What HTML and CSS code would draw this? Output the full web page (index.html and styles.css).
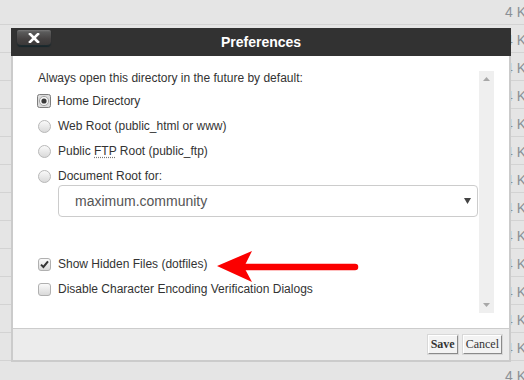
FILE: index.html
```html
<!DOCTYPE html>
<html>
<head>
<meta charset="utf-8">
<title>Preferences</title>
<link rel="stylesheet" href="styles.css">
</head>
<body>
<div class="bg">
  <div class="row"><span class="size">4 KB</span></div>
  <div class="row"><span class="size">4 KB</span></div>
  <div class="row"><span class="size">4 KB</span></div>
  <div class="row"><span class="size">4 KB</span></div>
  <div class="row"><span class="size">4 KB</span></div>
  <div class="row"><span class="size">4 KB</span></div>
  <div class="row"><span class="size">4 KB</span></div>
  <div class="row"><span class="size">4 KB</span></div>
  <div class="row"><span class="size">4 KB</span></div>
  <div class="row"><span class="size">4 KB</span></div>
  <div class="row"><span class="size">4 KB</span></div>
  <div class="row"><span class="size">4 KB</span></div>
  <div class="row"><span class="size">4 KB</span></div>
  <div class="row"><span class="size">4 KB</span></div>
</div>

<div class="dialog">
  <div class="titlebar">
    <button class="close" aria-label="Close">
      <svg width="12" height="10" viewBox="0 0 12 10"><path d="M2 1 L10 9 M10 1 L2 9" stroke="#fff" stroke-width="2.6" stroke-linecap="square"/></svg>
    </button>
    <span class="title">Preferences</span>
  </div>
  <div class="panel">
    <div class="body">
      <div class="content">
        <div class="heading">Always open this directory in the future by default:</div>
        <div class="options">
          <label class="opt">
            <svg class="ctl" width="14" height="14" viewBox="0 0 14 14"><rect x="0.5" y="0.5" width="13" height="13" rx="2" fill="#dcdcdc" stroke="#7d7d7d"/><circle cx="7" cy="7" r="4.6" fill="#f5f5f5" stroke="#a5a5a5"/><circle cx="7" cy="7" r="2.6" fill="#3a3a3a"/></svg>
            <span>Home Directory</span>
          </label>
          <label class="opt">
            <svg class="ctl" width="13" height="13" viewBox="0 0 13 13"><defs><linearGradient id="rg" x1="0" y1="0" x2="0" y2="1"><stop offset="0" stop-color="#fbfbfb"/><stop offset="1" stop-color="#d8d8d8"/></linearGradient></defs><circle cx="6.5" cy="6.5" r="6" fill="url(#rg)" stroke="#b8b8b8"/></svg>
            <span>Web Root (public_html or www)</span>
          </label>
          <label class="opt">
            <svg class="ctl" width="13" height="13" viewBox="0 0 13 13"><circle cx="6.5" cy="6.5" r="6" fill="url(#rg)" stroke="#b8b8b8"/></svg>
            <span>Public <abbr title="File Transfer Protocol">FTP</abbr> Root (public_ftp)</span>
          </label>
          <label class="opt">
            <svg class="ctl" width="13" height="13" viewBox="0 0 13 13"><circle cx="6.5" cy="6.5" r="6" fill="url(#rg)" stroke="#b8b8b8"/></svg>
            <span>Document Root for:</span>
          </label>
        </div>
        <div class="select">
          <span>maximum.community</span>
          <svg width="7" height="6" viewBox="0 0 7 6"><path d="M0 0 H7 L3.5 6 Z" fill="#444"/></svg>
        </div>
        <div class="checks">
          <label class="opt">
            <svg class="ctl" width="13" height="13" viewBox="0 0 13 13"><defs><linearGradient id="cg" x1="0" y1="0" x2="0" y2="1"><stop offset="0" stop-color="#fbfbfb"/><stop offset="1" stop-color="#d8d8d8"/></linearGradient></defs><rect x="0.5" y="0.5" width="12" height="12" rx="2.5" fill="url(#cg)" stroke="#b0b0b0"/><path d="M3 6.6 L5.4 9 L10 3.4" fill="none" stroke="#333" stroke-width="2"/></svg>
            <span>Show Hidden Files (dotfiles)</span>
          </label>
          <label class="opt">
            <svg class="ctl" width="13" height="13" viewBox="0 0 13 13"><rect x="0.5" y="0.5" width="12" height="12" rx="2.5" fill="url(#cg)" stroke="#b0b0b0"/></svg>
            <span>Disable Character Encoding Verification Dialogs</span>
          </label>
        </div>
      </div>
      <div class="scrollbar">
        <svg width="15" height="14" viewBox="0 0 15 14"><path d="M4 9 H11 L7.5 5 Z" fill="#a8a8a8"/></svg>
        <svg width="15" height="14" viewBox="0 0 15 14"><path d="M4 5 H11 L7.5 9 Z" fill="#a8a8a8"/></svg>
      </div>
    </div>
    <div class="footer">
      <button class="btn save">Save</button>
      <button class="btn">Cancel</button>
    </div>
  </div>
</div>

<svg class="annot" width="150" height="40" viewBox="0 0 150 40">
  <line x1="30" y1="21" x2="139" y2="21" stroke="#fb0000" stroke-width="6.5" stroke-linecap="round"/>
  <path d="M1 20 L36 5 L29 19 L29 23 L36 36 Z" fill="#fb0000"/>
</svg>
</body>
</html>
```

FILE: styles.css
```css
html, body {
  margin: 0;
  padding: 0;
}
body {
  width: 524px;
  height: 380px;
  overflow: hidden;
  position: relative;
  background: #e4e4e4;
  font-family: "Liberation Sans", Arial, sans-serif;
}

.bg {
  margin-top: -3px;
}
.row {
  border-bottom: 1px solid #d3d3d3;
  background: #e5e5e5;
  display: flex;
  align-items: center;
  padding-left: 505px;
  padding-top: 2px;
  height: 25px;
  white-space: nowrap;
  overflow: hidden;
}
.size {
  font-size: 14px;
  color: #8b9096;
}

.dialog {
  position: absolute;
  left: 11px;
  top: 28px;
  width: 500px;
}
.titlebar {
  height: 28px;
  background: #323232;
  display: flex;
  align-items: center;
  justify-content: center;
  position: relative;
}
.close {
  position: absolute;
  left: 6px;
  top: 2px;
  width: 34px;
  height: 16px;
  padding: 0;
  margin: 0;
  border: none;
  border-bottom: 1px solid #1d2a2e;
  border-radius: 2px 2px 4px 4px;
  background: linear-gradient(#7a7a7a 0, #5b5b5b 2px, #454242 60%, #3b3939 100%);
  display: flex;
  align-items: center;
  justify-content: center;
  box-shadow: 0 1px 1px #17262b;
}
.title {
  color: #fff;
  font-weight: bold;
  font-size: 14px;
}

.panel {
  border: 2px solid #cbcbcb;
  border-top: none;
}
.body {
  background: #fff;
  height: 272px;
  box-sizing: border-box;
  padding: 15px;
  display: flex;
}
.content {
  flex: 1;
  padding-left: 10px;
  padding-right: 1px;
  color: #333;
  font-size: 12px;
}
.heading {
  line-height: 14px;
}
.options {
  margin-top: 6px;
  display: flex;
  flex-direction: column;
  gap: 5px;
}
.opt {
  display: flex;
  align-items: center;
  height: 20px;
}
.ctl {
  flex: none;
  width: 13px;
  margin-right: 7px;
}
.opt:first-child .ctl {
  width: 14px;
  margin-left: -1px;
  margin-right: 6px;
}
.checks .opt:first-child .ctl {
  width: 13px;
  margin-left: 0;
  margin-right: 7px;
}
abbr {
  text-decoration: underline dotted #777;
  text-underline-offset: 2px;
}
.select {
  margin: -1px 0 0 20px;
  height: 32px;
  box-sizing: border-box;
  border: 1px solid #cccccc;
  border-radius: 4px;
  display: flex;
  align-items: center;
  justify-content: space-between;
  padding: 0 6px 0 16px;
  font-size: 14px;
  color: #555;
}
.checks {
  margin-top: 37px;
  display: flex;
  flex-direction: column;
  gap: 5px;
}
.scrollbar {
  width: 15px;
  background: #efefef;
  display: flex;
  flex-direction: column;
  justify-content: space-between;
  padding: 1px 0;
}
.scrollbar svg {
  display: block;
}

.footer {
  background: #ececec;
  border-top: 1px solid #cccccc;
  height: 31px;
  display: flex;
  align-items: center;
  justify-content: flex-end;
  gap: 5px;
  padding-right: 7px;
}
.btn {
  height: 19px;
  margin: 0;
  padding: 0 2px;
  font-family: "Liberation Serif", "Times New Roman", serif;
  font-size: 12px;
  color: #333;
  background: #f3f3f3;
  border: 1px solid;
  border-color: #ffffff #8a8a8a #8a8a8a #ffffff;
  box-shadow: 0 0 0 1px #d8d8d8;
}
.save {
  font-weight: bold;
}

.annot {
  position: absolute;
  left: 216px;
  top: 246px;
}
```
